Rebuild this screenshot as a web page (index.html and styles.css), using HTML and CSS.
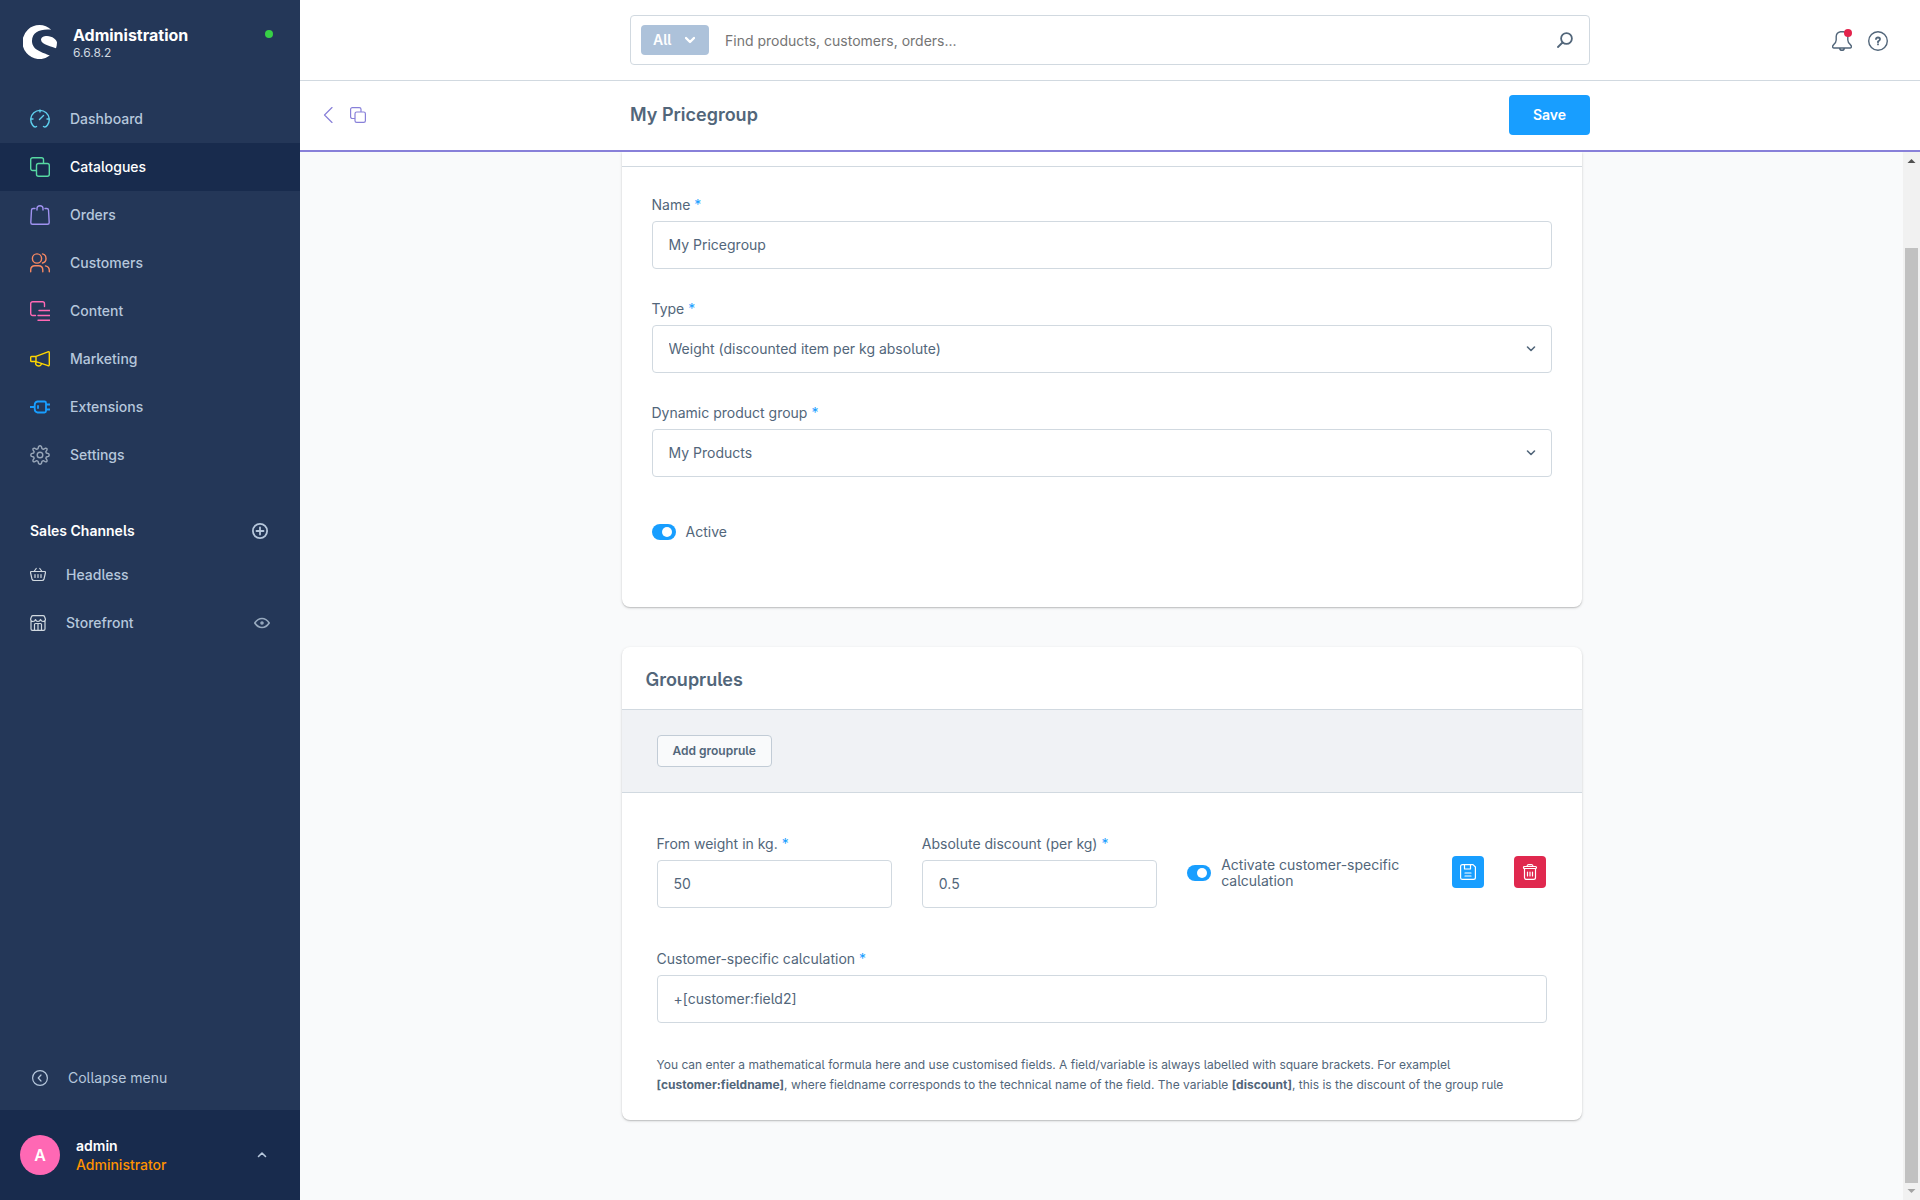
FILE: index.html
```html
<!DOCTYPE html>
<html lang="en">
<head>
<meta charset="utf-8">
<title>My Pricegroup | Administration</title>
<meta name="viewport" content="width=device-width, initial-scale=1">
<link rel="stylesheet" href="styles.css">
</head>
<body>
<div class="app">
  <aside class="sidebar">
    <header class="brand">
      <svg class="brand-logo" viewBox="0 0 34 34" aria-hidden="true"><path d="M28.2 4.8A17 17 0 1 0 26.8 30.6C20 27.300 9 25.500 9 16C9 7 18 3.600 28.200 4.800Z"/><path d="M18 14.800C18 12.400 20.600 11 24 11C29.500 11.200 33.500 14.500 34 17.500C34 19.500 33.600 21.500 33 23.200C30 22 18 19.500 18 14.800Z"/></svg>
      <div class="brand-text">
        <strong class="brand-name">Administration</strong>
        <span class="brand-version">6.6.8.2</span>
      </div>
      <span class="status-dot"></span>
    </header>
    <nav class="nav">
      <a class="nav-item" href="#"><svg class="icon-20 cyan" viewBox="0 0 20 20"><path d="M6.500 17.500C5 18.500 3.500 17.500 2.500 16A9.250 9.250 0 1 1 17.500 16C16.500 17.500 15 18.500 13.500 17.500M10 1V3M1 10H3M17 10H19M9.500 10.500L13.500 6.500"/></svg>Dashboard</a>
      <a class="nav-item active" href="#"><svg class="icon-20 green" viewBox="0 0 20 20"><path d="M6 13.500H2.700A2 2 0 0 1 .7 11.500V2.700A2 2 0 0 1 2.700.7H11.500A2 2 0 0 1 13.500 2.700V6"/><rect x="6.500" y="6.500" width="12.800" height="12.800" rx="2"/></svg>Catalogues</a>
      <a class="nav-item" href="#"><svg class="icon-20 purple" viewBox="0 0 20 20"><path d="M5 3.500H3.200Q1.600 3.500 1.500 5L.8 17.500Q.8 19.300 2.500 19.300H17.500Q19.200 19.300 19.200 17.500L18.500 5Q18.400 3.500 16.800 3.500H15M7 5V3.500Q7 .7 10 .7T13 3.500V5"/></svg>Orders</a>
      <a class="nav-item" href="#"><svg class="icon-20 orange" viewBox="0 0 20 20"><circle cx="7" cy="5.500" r="4.600"/><path d="M.7 18.800V17Q.7 12.700 5 12.700H8.500Q12.800 12.700 12.800 17V18.800M12.500.9A4.700 4.700 0 0 1 12.500 10M15.500 12.900Q19.300 13.800 19.300 17.500V18.800"/></svg>Customers</a>
      <a class="nav-item" href="#"><svg class="icon-20 pink" viewBox="0 0 20 20"><path d="M5.500 14.500H2.700A2 2 0 0 1 .7 12.500V2.700A2 2 0 0 1 2.700.7H12.500A2 2 0 0 1 14.500 2.700V5.500M9 9.500H20M8 14.500H20M8 19.300H20"/></svg>Content</a>
      <a class="nav-item" href="#"><svg class="icon-20 yellow" viewBox="0 0 20 20"><path d="M6 7.500H1.500Q.7 7.500.7 8.300V11.700Q.7 12.500 1.500 12.500H6ZM6 7.300L18 2.800Q19.300 2.500 19.300 3.800V15.700Q19.300 17 18 16.700L6 12.700M6 12.700C5 15.500 6.500 17 8.500 17C10.500 17 11.300 16 11.500 14.500"/></svg>Marketing</a>
      <a class="nav-item" href="#"><svg class="icon-20 blue" viewBox="0 0 20 20"><path d="M0 10H4.500M16 7.500H20M16 12.500H20M7.500 4.500H14.500Q16 4.500 16 6V14Q16 15.500 14.500 15.500H7.500Q4.700 15 4.700 12V8Q4.700 5 7.500 4.500ZM8 9V11"/></svg>Extensions</a>
      <a class="nav-item" href="#"><svg class="icon-20 grey" viewBox="0 0 20 20"><circle cx="10" cy="10" r="2.800"/><path d="M8.600 1.500Q10 .2 11.400 1.500L12 3.700L13.300 4.300L15.600 3.100Q17.300 3 17 4.800L15.800 6.800L16.300 8L18.500 8.600Q19.800 10 18.500 11.400L16.300 12L15.800 13.200L17 15.200Q17.300 17 15.600 16.900L13.300 15.700L12 16.300L11.400 18.500Q10 19.800 8.600 18.500L8 16.300L6.700 15.700L4.400 16.900Q2.700 17 3 15.200L4.200 13.200L3.700 12L1.500 11.400Q.2 10 1.500 8.600L3.700 8L4.200 6.800L3 4.800Q2.700 3 4.400 3.100L6.700 4.300L8 3.700Z"/></svg>Settings</a>
    </nav>
    <section class="channels">
      <div class="channels-head">
        <h2 class="channels-title">Sales Channels</h2>
        <button class="icon-button" aria-label="Add sales channel"><svg class="icon-16 bold" viewBox="0 0 16 16"><circle cx="8" cy="8" r="7.100"/><path d="M8 4.500V11.500M4.500 8H11.500"/></svg></button>
      </div>
      <a class="channel" href="#"><svg class="icon-16 light" viewBox="0 0 16 16"><path d="M1.200 4.500H14.800Q15.700 4.800 15.400 6L14 12Q13.600 13.500 12 13.500H4Q2.400 13.500 2 12L.6 6Q.3 4.800 1.200 4.500ZM4 4.500L6.200 1.500M12 4.500L9.800 1.500M5 7.500V10.500M8 7.500V10.500M11 7.500V10.500"/></svg>Headless</a>
      <a class="channel" href="#"><svg class="icon-16 light" viewBox="0 0 16 16"><path d="M1 6V14Q1 15.400 2.500 15.400H13.500Q15 15.400 15 14V6M.6 4L1.500 1.500Q1.800.6 3 .6H13Q14.200.6 14.500 1.500L15.400 4V5Q15 6.500 13 6.500Q11.500 6.500 10.500 4.500Q10 6.500 8 6.500T5.500 4.500Q5 6.500 3 6.500Q.6 6.500.6 4ZM4.500 15.400V9.500Q4.500 8.500 5.500 8.500H10.500Q11.500 8.500 11.500 9.500V15.400M8 8.500V15.400"/></svg><span class="channel-name">Storefront</span><svg class="eye" viewBox="0 0 16 16"><path d="M.8 8Q3.800 3.500 8 3.500T15.200 8Q12.200 12.500 8 12.500T.8 8Z"/><circle cx="8" cy="8" r="1"/></svg></a>
    </section>
    <button class="collapse"><svg class="icon-16" viewBox="0 0 16 16"><circle cx="8" cy="8" r="7.400"/><path d="M9 5L6.200 8L9 11"/></svg>Collapse menu</button>
    <button class="user">
      <span class="avatar">A</span>
      <span class="user-text"><strong class="user-name">admin</strong><span class="user-role">Administrator</span></span>
      <svg class="icon-10" viewBox="0 0 10 10"><path d="M1.500 6.500L5 3L8.500 6.500"/></svg>
    </button>
  </aside>

  <div class="desk">
    <header class="topbar">
      <form class="search" role="search">
        <button class="search-type" type="button">All<svg class="icon-10" viewBox="0 0 10 10"><path d="M1 3L5 7L9 3"/></svg></button>
        <input class="search-input" type="search" aria-label="Search" placeholder="Find products, customers, orders...">
        <svg class="icon-16 bold" viewBox="0 0 16 16"><circle cx="9.500" cy="6.500" r="5.400"/><path d="M5.500 10.500L1 15"/></svg>
      </form>
      <div class="topbar-actions">
        <button class="icon-button bell" aria-label="Notifications"><svg class="icon-20" viewBox="0 0 20 20"><path d="M10 .8H8.500Q4.500 1.500 4.200 5.500V9Q4 11.500 2.200 13L.8 14.800Q.2 17 2 17H18Q19.800 17 19.200 14.800L17.800 13Q16 11.500 15.800 9V5.500Q15.500 1.500 11.500.8ZM7.500 17Q8 19.300 10 19.300T12.500 17"/></svg><span class="bell-dot"></span></button>
        <button class="icon-button" aria-label="Help"><svg class="icon-20" viewBox="0 0 20 20"><circle cx="10" cy="10" r="9.300"/><path class="bold" d="M8 8Q8 6.500 10 6.500T12 8.200Q12 9.300 10 10.500V11.200M10 13.200V13.400"/></svg></button>
      </div>
    </header>
    <div class="pagebar">
      <div class="pagebar-nav">
        <a href="#" aria-label="Back"><svg class="icon-16" viewBox="0 0 16 16"><path d="M11 .5L3.500 8L11 15.500"/></svg></a>
        <a href="#" aria-label="Catalogues"><svg class="icon-16" viewBox="0 0 16 16"><path d="M4.500 11.500H2.300A1.700 1.700 0 0 1 .6 9.800V2.300A1.700 1.700 0 0 1 2.300.6H9.300A1.700 1.700 0 0 1 11 2.300V4.500"/><rect x="5" y="5" width="10.400" height="10.400" rx="1.700"/></svg></a>
      </div>
      <div class="pagebar-main">
        <h1 class="page-title">My Pricegroup</h1>
        <button class="save">Save</button>
      </div>
    </div>
    <div class="viewport">
      <main class="content">
        <section class="card card-cut">
          <div class="card-sliver"></div>
          <div class="card-body">
            <div class="field">
              <label for="name">Name <span class="req">*</span></label>
              <input class="control" id="name" type="text" value="My Pricegroup">
            </div>
            <div class="field">
              <label for="type">Type <span class="req">*</span></label>
              <div class="select">
                <select class="control" id="type"><option>Weight (discounted item per kg absolute)</option></select>
                <svg class="icon-10" viewBox="0 0 10 10"><path d="M1.500 3L5 6.500L8.500 3"/></svg>
              </div>
            </div>
            <div class="field">
              <label for="group">Dynamic product group <span class="req">*</span></label>
              <div class="select">
                <select class="control" id="group"><option>My Products</option></select>
                <svg class="icon-10" viewBox="0 0 10 10"><path d="M1.500 3L5 6.500L8.500 3"/></svg>
              </div>
            </div>
            <div class="switch-row">
              <input class="switch" id="active" type="checkbox" checked><label for="active">Active</label>
            </div>
          </div>
        </section>

        <section class="card">
          <h2 class="card-title">Grouprules</h2>
          <div class="card-toolbar"><button class="add">Add grouprule</button></div>
          <div class="rule">
            <div class="rule-grid">
              <div class="field">
                <label for="from">From weight in kg. <span class="req">*</span></label>
                <input class="control" id="from" type="text" value="50">
              </div>
              <div class="field">
                <label for="discount">Absolute discount (per kg) <span class="req">*</span></label>
                <input class="control" id="discount" type="text" value="0.5">
              </div>
              <div class="switch-row">
                <input class="switch" id="custom" type="checkbox" checked><label for="custom">Activate customer-specific calculation</label>
              </div>
              <button class="square" aria-label="Save rule"><svg class="icon-16" viewBox="0 0 16 16"><path d="M2.500.6H13L15.400 3V13.500Q15.400 15.400 13.500 15.400H2.500Q.6 15.400.6 13.500V2.500Q.6.600 2.500.6ZM4.500.6V5H10.500V.6M5 9H11M5 12H11"/></svg></button>
              <button class="square danger" aria-label="Delete rule"><svg class="icon-16" viewBox="0 0 16 16"><path d="M2.500 4.500V13.500Q2.500 15.400 4.400 15.400H11.600Q13.500 15.400 13.500 13.500V4.500M2.500 2.500H13.500Q14.500 2.500 14.500 3.500T13.500 4.500H2.500Q1.500 4.500 1.500 3.500T2.500 2.500ZM5 2.500Q5 .6 6.500.6H9.500Q11 .6 11 2.500M5.500 8V12M8 8V12M10.500 8V12"/></svg></button>
            </div>
            <div class="field">
              <label for="formula">Customer-specific calculation <span class="req">*</span></label>
              <input class="control" id="formula" type="text" value="+[customer:field2]">
            </div>
            <p class="hint">You can enter a mathematical formula here and use customised fields. A field/variable is always labelled with square brackets. For examplel <b>[customer:fieldname]</b>, where fieldname corresponds to the technical name of the field. The variable <b>[discount]</b>, this is the discount of the group rule</p>
          </div>
        </section>
      </main>
      <div class="scrollbar" aria-hidden="true">
        <svg class="scroll-arrow" viewBox="0 0 17 17"><path d="M4.500 11H12.500L8.500 7Z"/></svg>
        <div class="scroll-track"><div class="scroll-thumb"></div></div>
        <svg class="scroll-arrow end" viewBox="0 0 17 17"><path d="M4.500 6H12.500L8.500 10Z"/></svg>
      </div>
    </div>
  </div>
</div>
</body>
</html>
```
FILE: styles.css
```css
* { box-sizing: border-box; }

body {
  margin: 0;
  font: 14px/16px Inter, "Liberation Sans", sans-serif;
  font-feature-settings: "cv05", "cv10";
  color: #52667a;
  background: #f9fafb;
}

button, input, select {
  font: inherit;
  font-feature-settings: inherit;
  color: inherit;
}

button {
  padding: 0;
  border: 0;
  background: none;
  cursor: pointer;
}

a { color: inherit; text-decoration: none; }
h1, h2, p { margin: 0; }

svg {
  flex: none;
  display: block;
  fill: none;
  stroke: currentColor;
  stroke-width: 1.4;
  stroke-linecap: round;
  stroke-linejoin: round;
}

.bold { stroke-width: 1.8; }
.icon-20 { width: 20px; height: 20px; }
.icon-16 { width: 16px; height: 16px; stroke-width: 1.2; }
.icon-16.bold { stroke-width: 1.8; }
.icon-10 { width: 10px; height: 10px; stroke-width: 1.6; }
.icon-button { position: relative; flex: none; }

.app { display: flex; height: 100vh; }

/* Sidebar */
.sidebar {
  flex: none;
  width: 300px;
  display: flex;
  flex-direction: column;
  background: #243758;
  color: #b6c7dc;
}

.brand {
  display: flex;
  gap: 16px;
  padding: 25px 27px 36px 23px;
}

.brand-logo { width: 34px; height: 34px; fill: #fff; stroke: none; }
.brand-text { flex: 1; display: flex; flex-direction: column; }
.brand-name { font-size: 16px; line-height: 20px; font-weight: 700; color: #fff; }
.brand-version { font-size: 12px; line-height: 16px; color: #d1d9e0; }
.brand-text { height: 34px; }
.status-dot { width: 8px; height: 8px; margin-top: 5px; border-radius: 50%; background: #37d046; }

.nav-item {
  display: flex;
  align-items: center;
  gap: 20px;
  height: 48px;
  padding: 0 30px;
  font-weight: 500;
}

.nav-item.active { background: #182b4d; color: #fff; }
.cyan { color: #5fd0ee; }
.green { color: #57d9a3; }
.purple { color: #a092f0; }
.orange { color: #f88962; }
.pink { color: #ff68b4; }
.yellow { color: #ffd700; }
.blue { color: #189eff; stroke-width: 1.800; }
.grey { color: #98a6b8; }
.light { color: #d1d9e0; }

.channels { margin-top: 36px; font-weight: 500; }
.channels-head { display: flex; justify-content: space-between; align-items: center; padding: 0 32px 0 30px; height: 32px; margin-bottom: 4px; }
.channels-title { font-size: 14px; font-weight: 600; color: #fff; }
.channel { display: flex; align-items: center; gap: 20px; height: 48px; padding: 0 30px; }
.channel-name { flex: 1; }
.eye { width: 16px; height: 16px; color: #98aabf; stroke-width: 1.6; }

.collapse { display: flex; align-items: center; gap: 20px; height: 64px; margin-top: auto; padding: 0 32px; font-weight: 400; }
.user { display: flex; align-items: center; gap: 16px; height: 90px; padding: 0 33px 0 20px; background: #182b4d; text-align: left; }
.avatar { width: 40px; height: 40px; border-radius: 50%; background: #ff68b4; color: #fff; font-weight: 600; font-size: 16px; line-height: 40px; text-align: center; }
.user-text { flex: 1; display: flex; flex-direction: column; line-height: 19px; font-weight: 500; }
.user-name { font-weight: 600; color: #fff; }
.user-role { color: #ff9200; }

/* Main column */
.desk { flex: 1; min-width: 0; display: flex; flex-direction: column; }

.topbar, .pagebar {
  flex: none;
  display: grid;
  grid-template-columns: 1fr minmax(0, 960px) 1fr;
  align-items: center;
  background: #fff;
}

.topbar { height: 81px; border-bottom: 1px solid #d1d9e0; }

.search {
  grid-column: 2;
  display: flex;
  align-items: center;
  height: 50px;
  padding: 0 16px 0 10px;
  border: 1px solid #d1d9e0;
  border-radius: 4px;
}

.search-type { display: flex; align-items: center; justify-content: space-between; width: 68px; height: 30px; padding: 0 14px 0 12px; border-radius: 4px; background: #adc2da; color: #fff; font-weight: 600; }
.search-type .icon-10 { stroke-width: 2.400; }
.search-input { flex: 1; min-width: 0; border: 0; outline: 0; padding: 2px 16px 0; background: none; }
.search-input::placeholder { color: #757575; }

.topbar-actions { display: flex; justify-content: flex-end; gap: 16px; padding: 2px 32px 0 0; }
.bell-dot { position: absolute; top: -2px; right: 0; width: 8px; height: 8px; border-radius: 50%; background: #e3244c; }

.pagebar { height: 71px; padding-bottom: 1px; border-bottom: 2px solid #8880d9; }
.pagebar-nav { display: flex; gap: 13px; padding-left: 21px; color: #8880d9; }
.pagebar-main { display: flex; justify-content: space-between; align-items: center; }
.page-title { font-size: 18px; line-height: 24px; font-weight: 600; }
.save { width: 81px; height: 40px; border-radius: 4px; background: #189eff; color: #fff; font-weight: 600; }

.viewport { flex: 1; min-height: 0; display: flex; overflow: hidden; }
.content { flex: 1; min-width: 0; display: flex; flex-direction: column; align-items: center; gap: 40px; }

.card {
  width: 100%;
  max-width: 960px;
  border-radius: 8px;
  background: #fff;
  box-shadow: 0 1px 1px rgba(0, 0, 0, .12), 0 1px 3px rgba(0, 0, 0, .16);
}

.card-cut { border-radius: 0 0 8px 8px; }
.card-sliver { height: 15px; border-bottom: 1px solid #d1d9e0; }
.card-body { padding: 30px 30px 67px; display: flex; flex-direction: column; gap: 32px; }
.card-title { padding: 21px 24px 17px; font-size: 18px; line-height: 24px; font-weight: 600; border-bottom: 1px solid #d1d9e0; }
.card-toolbar { padding: 25px 35px; background: #f0f2f5; border-bottom: 1px solid #d1d9e0; }
.card-toolbar .add { display: block; height: 32px; padding: 0 15px; border: 1px solid #c2ccd6; border-radius: 4px; background: #f9fafb; font-size: 12px; font-weight: 600; }

.field { display: flex; flex-direction: column; gap: 8px; min-width: 0; }
.req { color: #189eff; }

.control {
  width: 100%;
  height: 48px;
  padding: 0 16px;
  border: 1px solid #d1d9e0;
  border-radius: 4px;
  background: #fff;
  appearance: none;
}

input.control { padding-bottom: 2px; }

.select { display: grid; align-items: center; }
.select > * { grid-area: 1 / 1; }
.select .icon-10 { justify-self: end; margin-right: 16px; pointer-events: none; }

.switch-row { display: flex; align-items: center; gap: 10px; }
.card-body .switch-row { margin-top: 15px; }

.switch {
  flex: none;
  width: 24px;
  height: 16px;
  margin: 0;
  padding: 3px 4px;
  border-radius: 8px;
  background: #189eff;
  appearance: none;
}

.switch::before { content: ""; display: block; width: 10px; height: 10px; margin-left: auto; border-radius: 50%; background: #fff; }

.rule { padding: 43px 35px 25px; display: flex; flex-direction: column; }
.rule-grid { display: grid; grid-template-columns: 1fr 1fr 1fr 32px 32px; gap: 30px; align-items: center; margin-bottom: 43px; }
.rule-grid .switch-row { padding-top: 2px; }
.square { display: grid; place-items: center; width: 32px; height: 32px; border-radius: 4px; background: #189eff; color: #fff; }
.square.danger { background: #e0284e; }
.hint { margin-top: 32px; font-size: 12px; line-height: 20px; }

/* Scrollbar */
.scrollbar { flex: none; width: 17px; display: flex; flex-direction: column; background: #f1f1f1; }
.scroll-arrow { width: 17px; height: 17px; fill: #505050; stroke: none; }
.scroll-arrow.end { fill: #a3a3a3; }
.scroll-track { flex: 1; display: flex; flex-direction: column; justify-content: flex-end; padding: 0 2px; }
.scroll-thumb { height: 92.2%; background: #c1c1c1; }
```
